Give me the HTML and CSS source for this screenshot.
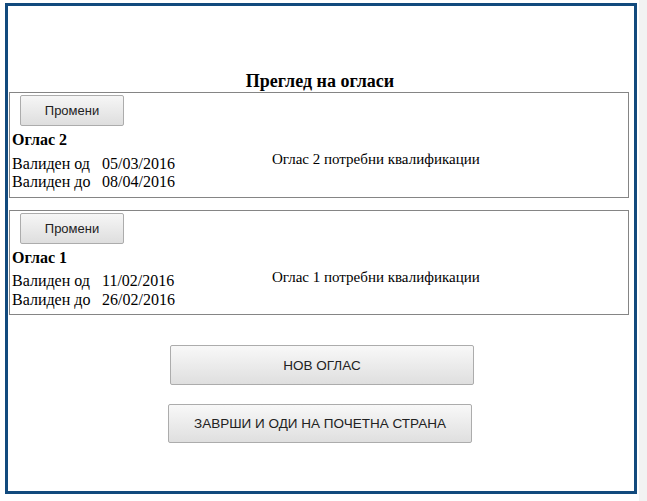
FILE: index.html
```html
<!DOCTYPE html>
<html>
<head>
<meta charset="utf-8">
<link rel="stylesheet" href="styles.css">
</head>
<body>
<div class="frame">
  <h1 class="title">Преглед на огласи</h1>
  <div class="ad">
    <button class="edit">Промени</button>
    <div class="ad-body">
      <div class="ad-left">
        <div class="ad-name">Оглас 2</div>
        <div class="dates">
          <span>Валиден од</span><span>05/03/2016</span>
          <span>Валиден до</span><span>08/04/2016</span>
        </div>
      </div>
      <div class="ad-desc">Оглас 2 потребни квалификации</div>
    </div>
  </div>
  <div class="ad">
    <button class="edit">Промени</button>
    <div class="ad-body">
      <div class="ad-left">
        <div class="ad-name">Оглас 1</div>
        <div class="dates">
          <span>Валиден од</span><span>11/02/2016</span>
          <span>Валиден до</span><span>26/02/2016</span>
        </div>
      </div>
      <div class="ad-desc">Оглас 1 потребни квалификации</div>
    </div>
  </div>
  <div class="actions">
    <button class="big new">НОВ ОГЛАС</button>
    <button class="big finish">ЗАВРШИ И ОДИ НА ПОЧЕТНА СТРАНА</button>
  </div>
</div>
<div class="strip"></div>
</body>
</html>
```
FILE: styles.css
```css
html, body {
  margin: 0;
  padding: 0;
  background: #fff;
}
body {
  display: flex;
  align-items: flex-start;
  font-family: "Liberation Serif", "Times New Roman", serif;
  color: #000;
  height: 501px;
  overflow: hidden;
}
.frame {
  box-sizing: border-box;
  margin: 3px 0 0 5px;
  width: 632px;
  height: 491px;
  border: 3px solid #124a7d;
  padding-top: 65px;
  display: flex;
  flex-direction: column;
}
.strip {
  width: 8px;
  height: 501px;
  margin-left: 2px;
  background: #f2f2f2;
}
.title {
  margin: 0 0 1px 0;
  font-size: 18px;
  font-weight: bold;
  text-align: center;
  line-height: 20px;
  padding-right: 2px;
}
.ad {
  margin: 0 0 12px 1px;
  width: 620px;
  box-sizing: border-box;
  border: 1px solid #858585;
  padding: 2px 0 5px 1px;
  display: flex;
  flex-direction: column;
  align-items: flex-start;
}
.edit {
  margin-left: 9px;
  width: 104px;
  height: 31px;
  font-family: "Liberation Sans", Arial, sans-serif;
  font-size: 13px;
  color: #222;
  border: 1px solid #acacac;
  border-radius: 2px;
  background: linear-gradient(#f6f6f6, #dedede);
  padding: 0;
}
.ad-body {
  display: grid;
  grid-template-columns: 261px 1fr;
  align-items: center;
  width: 100%;
  margin-top: 5px;
}
.ad-left {
  padding-left: 1px;
}
.ad-name {
  font-weight: bold;
  font-size: 16px;
  line-height: 18.5px;
}
.dates {
  margin-top: 5px;
  display: grid;
  grid-template-columns: 82px auto;
  column-gap: 8px;
  justify-content: start;
  font-size: 16px;
  line-height: 18.6px;
}
.ad-desc {
  font-size: 15px;
  line-height: 17px;
  margin-top: -3px;
}
.actions {
  margin-top: 18px;
  display: flex;
  flex-direction: column;
  align-items: center;
  gap: 19px;
}
.big {
  width: 304px;
  height: 40px;
  font-family: "Liberation Sans", Arial, sans-serif;
  font-size: 13.5px;
  color: #222;
  border: 1px solid #acacac;
  border-radius: 2px;
  background: linear-gradient(#f8f8f8, #dfdfdf);
  padding: 0;
}
.new {
  margin-left: 2px;
}
.finish {
  margin-right: 2px;
  height: 39px;
}
```
